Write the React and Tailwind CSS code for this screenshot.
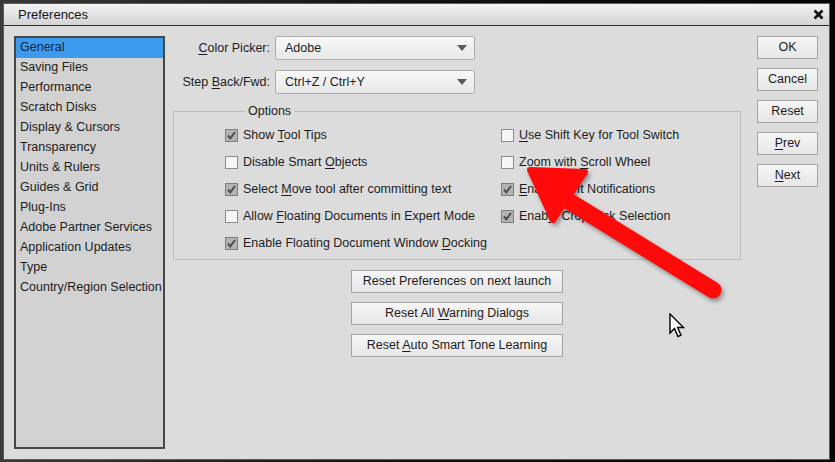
import React from 'react';

const FONT = { fontFamily: '"Liberation Sans", Arial, sans-serif' };

const SIDEBAR = [
  'General',
  'Saving Files',
  'Performance',
  'Scratch Disks',
  'Display & Cursors',
  'Transparency',
  'Units & Rulers',
  'Guides & Grid',
  'Plug-Ins',
  'Adobe Partner Services',
  'Application Updates',
  'Type',
  'Country/Region Selection',
];

// label with one underlined mnemonic letter: [before, key, after]
const Mn = ({ parts }) => (
  <span className="whitespace-pre">
    {parts[0]}
    <span className="underline underline-offset-2">{parts[1]}</span>
    {parts[2]}
  </span>
);

const Checkbox = ({ checked }) => (
  <svg width="13" height="13" viewBox="0 0 13 13" className="shrink-0">
    <rect x="0.5" y="0.5" width="12" height="12" fill={checked ? '#b3b3b3' : '#f6f6f6'} stroke={checked ? '#7d7d7d' : '#8c8c8c'} />
    {checked && <path d="M3 6.5 L5.3 9.3 L10 3" fill="none" stroke="#4d4d4d" strokeWidth="2" />}
  </svg>
);

const Option = ({ checked, parts }) => (
  <div className="flex items-center h-[27px] gap-[5px] text-[12.5px] text-[#1c1c1c] whitespace-nowrap">
    <Checkbox checked={checked} />
    <Mn parts={parts} />
  </div>
);

const Select = ({ value }) => (
  <div className="flex items-center justify-between w-[200px] h-[24px] pl-[9px] pr-[7px] border border-[#ababab] rounded-[2px] bg-gradient-to-b from-[#f8f8f8] to-[#e8e8e8] text-[12.5px] text-[#1c1c1c]">
    <span>{value}</span>
    <svg width="10" height="6" viewBox="0 0 10 6">
      <path d="M0 0 L10 0 L5 6 Z" fill="#5a5a5a" />
    </svg>
  </div>
);

const Btn = ({ children, className = '' }) => (
  <div className={`flex items-center justify-center h-[23px] border border-[#a3a3a3] bg-gradient-to-b from-[#f6f6f6] to-[#e6e6e6] text-[12.5px] text-[#1c1c1c] ${className}`}>
    <span className="whitespace-pre">{children}</span>
  </div>
);

export default function App() {
  return (
    <div className="relative w-[835px] h-[462px] overflow-hidden bg-gradient-to-r from-[#3a3a3a] via-[#111] to-[#050505] pt-[3px] pl-[3px]" style={FONT}>
      <div className="flex flex-col w-[827px] h-[457px] border border-[#5c5c5c] bg-[#dcdcdc]">
        {/* title bar */}
        <div className="flex items-center justify-between h-[22px] pl-[14px] pr-[5px] border-b border-[#2a2a2a] bg-gradient-to-b from-[#f3f3f3] to-[#d4d4d4]">
          <span className="text-[13px] text-[#151515] pt-[1px]">Preferences</span>
          <svg width="11" height="11" viewBox="0 0 11 11">
            <path d="M1.5 1.5 L9.5 9.5 M9.5 1.5 L1.5 9.5" stroke="#111" strokeWidth="2.6" />
          </svg>
        </div>

        <div className="flex flex-1 pt-[10px] pb-[10px] pl-[10px]">
          {/* category list */}
          <div className="w-[151px] border-2 border-[#474747] bg-[#d2d2d2] text-[12.5px] text-[#1c1c1c] whitespace-nowrap">
            {SIDEBAR.map((s, i) => (
              <div key={s} className={`h-[20px] flex items-center pl-[4px] pb-[1px] ${i === 0 ? 'bg-[#3d9bef] text-[#10243c]' : ''}`}>
                {s}
              </div>
            ))}
          </div>

          {/* settings */}
          <div className="flex flex-col ml-[8px] w-[568px]">
            <div className="flex items-center">
              <span className="w-[97px] text-right text-[12.5px] text-[#1c1c1c]"><Mn parts={['', 'C', 'olor Picker:']} /></span>
              <div className="ml-[5px]"><Select value="Adobe" /></div>
            </div>
            <div className="flex items-center mt-[10px]">
              <span className="w-[97px] text-right text-[12.5px] text-[#1c1c1c]"><Mn parts={['Step ', 'B', 'ack/Fwd:']} /></span>
              <div className="ml-[5px]"><Select value="Ctrl+Z / Ctrl+Y" /></div>
            </div>

            <fieldset className="mt-[9px] border border-[#bdbdbd] pl-[51px] pt-[3px] pb-[2px]">
              <legend className="ml-[20px] px-[3px] h-[16px] leading-[16px] text-[12.5px] text-[#1c1c1c]">Options</legend>
              <div className="grid grid-cols-[276px_1fr]">
                <div className="flex flex-col">
                  <Option checked parts={['Show ', 'T', 'ool Tips']} />
                  <Option parts={['Disable Smart ', 'O', 'bjects']} />
                  <Option checked parts={['Select ', 'M', 'ove tool after committing text']} />
                  <Option parts={['Allow ', 'F', 'loating Documents in Expert Mode']} />
                  <Option checked parts={['Enable Floating Document Window ', 'D', 'ocking']} />
                </div>
                <div className="flex flex-col">
                  <Option parts={['', 'U', 'se Shift Key for Tool Switch']} />
                  <Option parts={['Zoom with ', 'S', 'croll Wheel']} />
                  <Option checked parts={['', 'E', 'nable Soft Notifications']} />
                  <Option checked parts={['Enab', 'l', 'e Crop Pick Selection']} />
                </div>
              </div>
            </fieldset>

            <div className="flex flex-col items-center gap-[9px] mt-[10px]">
              <Btn className="w-[212px]">Reset Preferences on next launch</Btn>
              <Btn className="w-[212px]"><Mn parts={['Reset All ', 'W', 'arning Dialogs']} /></Btn>
              <Btn className="w-[212px]"><Mn parts={['Reset ', 'A', 'uto Smart Tone Learning']} /></Btn>
            </div>
          </div>

          {/* dialog buttons */}
          <div className="flex flex-col gap-[9px] ml-[16px] w-[61px]">
            <Btn>OK</Btn>
            <Btn>Cancel</Btn>
            <Btn>Reset</Btn>
            <Btn><Mn parts={['', 'P', 'rev']} /></Btn>
            <Btn><Mn parts={['', 'N', 'ext']} /></Btn>
          </div>
        </div>
      </div>

      {/* red annotation arrow + mouse pointer, drawn over the dialog */}
      <svg className="absolute left-0 top-0 pointer-events-none drop-shadow-[2px_3px_2px_rgba(0,0,0,0.35)]" width="835" height="462" viewBox="0 0 835 462">
        <line x1="562" y1="197" x2="713" y2="290" stroke="#ff0a0a" strokeWidth="17" strokeLinecap="round" />
        <path d="M530 170 L585 172 L553 220 Z" fill="#ff0a0a" stroke="#ff0a0a" strokeWidth="6" strokeLinejoin="round" />
      </svg>
      <svg className="absolute left-[669px] top-[313px] pointer-events-none" width="18" height="26" viewBox="0 0 18 26">
        <path d="M1 1 L1 20 L5.5 15.5 L9 23.5 L12 22.2 L8.6 14.5 L14.5 14.5 Z" fill="#fff" stroke="#000" strokeWidth="1.4" strokeLinejoin="miter" />
      </svg>
    </div>
  );
}
